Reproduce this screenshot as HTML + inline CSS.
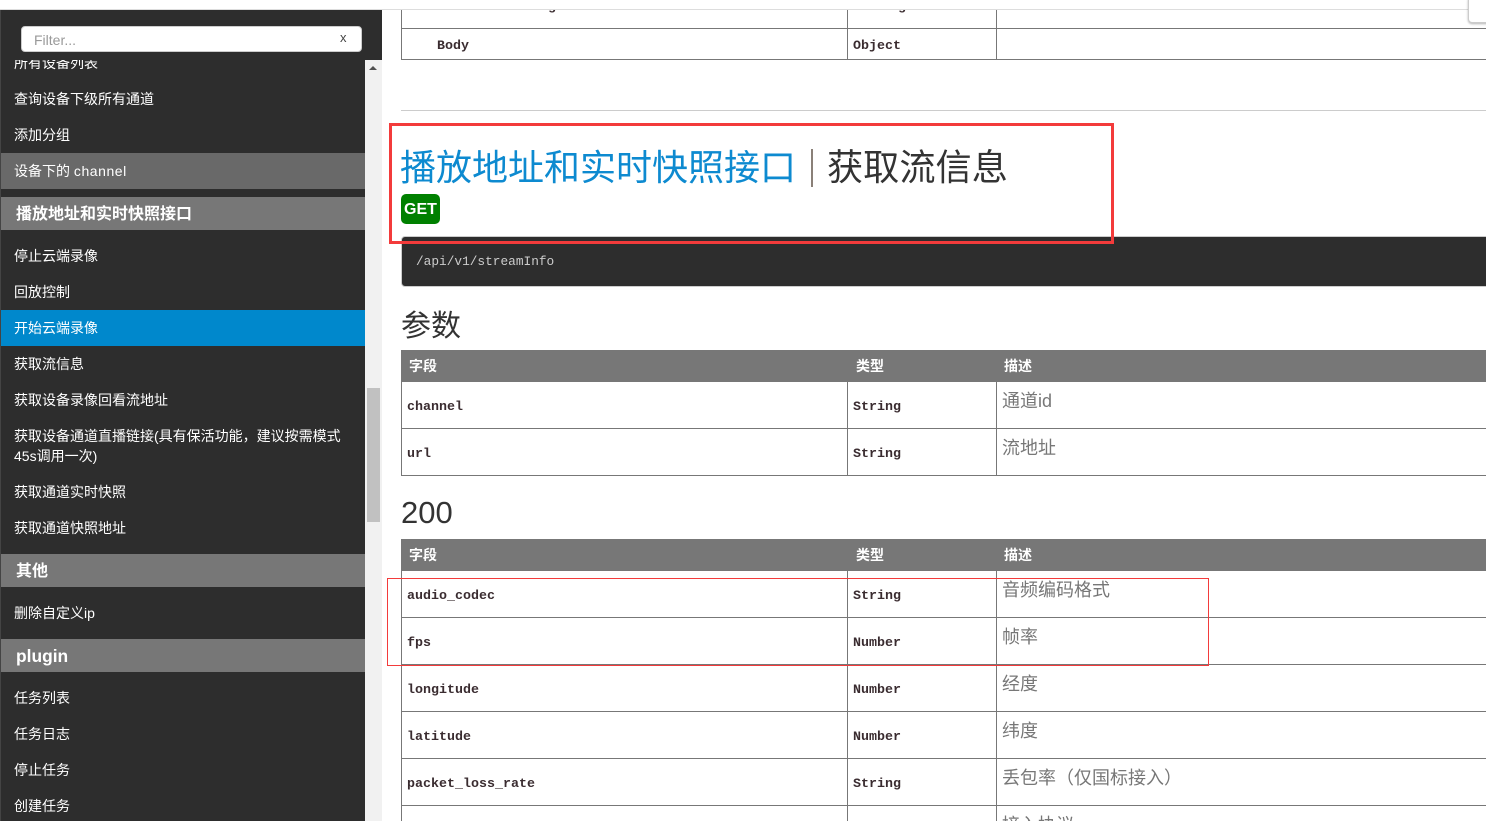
<!DOCTYPE html>
<html lang="zh"><head><meta charset="utf-8"><title>API</title>
<style>
html,body{margin:0;padding:0;background:#fff;overflow:hidden;width:1486px;height:821px}
#p{position:relative;width:1486px;height:821px;overflow:hidden;font-family:"Liberation Sans","Noto Sans CJK SC",sans-serif}
.a{position:absolute}
.t{position:absolute;white-space:nowrap}
.s{left:14px;font-size:14px;line-height:20px;color:#fff;height:20px}
.h{left:16px;font-size:16px;line-height:24px;height:24px;color:#fff;font-weight:700}
.band{position:absolute;left:1px;width:364px}
.l{position:absolute;background:#777}
.m{position:absolute;white-space:nowrap;font-family:"Liberation Mono",monospace;font-weight:700;font-size:13.33px;line-height:16px;height:16px;color:#3a2c30}
.th{position:absolute;white-space:nowrap;font-size:14px;font-weight:700;color:#fff;line-height:20px;height:20px}
.d{position:absolute;left:1002px;white-space:nowrap;font-size:18px;line-height:24px;height:24px;color:#777}
</style></head><body><div id="p">

<!-- top strip -->
<div class="a" style="left:0;top:9px;width:1486px;height:1px;background:#ddd"></div>

<!-- first table fragment -->
<div class="l" style="left:401px;top:10px;width:1px;height:50px"></div>
<div class="l" style="left:847px;top:10px;width:1px;height:50px"></div>
<div class="l" style="left:996px;top:10px;width:1px;height:50px"></div>
<div class="l" style="left:401px;top:28px;width:1085px;height:1px"></div>
<div class="l" style="left:401px;top:59px;width:1085px;height:1px"></div>
<div class="a" style="left:517px;top:10px;width:50px;height:3px;overflow:hidden"><span class="m" style="left:31px;top:-10px">g</span></div>
<div class="a" style="left:880px;top:10px;width:50px;height:3px;overflow:hidden"><span class="m" style="left:18px;top:-10px">g</span></div>
<span class="m" style="left:437px;top:39px">Body</span>
<span class="m" style="left:853px;top:39px">Object</span>
<div class="a" style="left:1468px;top:-4px;width:24px;height:25px;background:#fff;border:1px solid #ccc;border-radius:4px;box-shadow:0 1px 2px rgba(0,0,0,.3)"></div>

<div class="a" style="left:401px;top:110px;width:1085px;height:1px;background:#ccc"></div>

<!-- title -->
<div class="t" style="left:400px;top:143px;font-size:36px;line-height:50px;height:50px;color:#0d8ad0">播放地址和实时快照接口</div>
<div class="a" style="left:811px;top:149px;width:2px;height:38px;background:#8a8078"></div>
<div class="t" style="left:827px;top:143px;font-size:36.2px;line-height:50px;height:50px;color:#333">获取流信息</div>
<div class="a" style="left:401px;top:194px;width:39px;height:30px;background:#008000;border-radius:5px;color:#fff;font-weight:700;font-size:16px;line-height:31px;text-align:center">GET</div>

<!-- code block -->
<div class="a" style="left:401px;top:236px;width:1100px;height:51px;background:#2d2d2d;border:1px solid #ccc;border-radius:4px;box-sizing:border-box"></div>
<div class="t" style="left:416px;top:254px;font-family:'Liberation Mono',monospace;font-size:12.8px;line-height:16px;color:#ccc">/api/v1/streamInfo</div>

<!-- params -->
<div class="t" style="left:401px;top:305px;font-size:30px;line-height:44px;color:#333">参数</div>
<div class="a" style="left:401px;top:350px;width:1085px;height:32px;background:#777"></div>
<span class="th" style="left:409px;top:356px">字段</span>
<span class="th" style="left:856px;top:356px">类型</span>
<span class="th" style="left:1004px;top:356px">描述</span>
<div class="l" style="left:401px;top:382px;width:1px;height:94px"></div>
<div class="l" style="left:847px;top:382px;width:1px;height:94px"></div>
<div class="l" style="left:996px;top:382px;width:1px;height:94px"></div>
<div class="l" style="left:401px;top:428px;width:1085px;height:1px"></div>
<div class="l" style="left:401px;top:475px;width:1085px;height:1px"></div>
<span class="m" style="left:407px;top:400px">channel</span>
<span class="m" style="left:853px;top:400px">String</span>
<span class="d" style="top:389px">通道id</span>
<span class="m" style="left:407px;top:447px">url</span>
<span class="m" style="left:853px;top:447px">String</span>
<span class="d" style="top:436px">流地址</span>

<!-- 200 -->
<div class="t" style="left:401px;top:491px;font-size:31px;line-height:44px;color:#333">200</div>
<div class="a" style="left:401px;top:539px;width:1085px;height:32px;background:#777"></div>
<span class="th" style="left:409px;top:545px">字段</span>
<span class="th" style="left:856px;top:545px">类型</span>
<span class="th" style="left:1004px;top:545px">描述</span>
<div class="l" style="left:401px;top:571px;width:1px;height:250px"></div>
<div class="l" style="left:847px;top:571px;width:1px;height:250px"></div>
<div class="l" style="left:996px;top:571px;width:1px;height:250px"></div>
<div class="l" style="left:401px;top:617px;width:1085px;height:1px"></div>
<div class="l" style="left:401px;top:664px;width:1085px;height:1px"></div>
<div class="l" style="left:401px;top:711px;width:1085px;height:1px"></div>
<div class="l" style="left:401px;top:758px;width:1085px;height:1px"></div>
<div class="l" style="left:401px;top:805px;width:1085px;height:1px"></div>
<span class="m" style="left:407px;top:589px">audio_codec</span>
<span class="m" style="left:853px;top:589px">String</span>
<span class="d" style="top:578px">音频编码格式</span>
<span class="m" style="left:407px;top:636px">fps</span>
<span class="m" style="left:853px;top:636px">Number</span>
<span class="d" style="top:625px">帧率</span>
<span class="m" style="left:407px;top:683px">longitude</span>
<span class="m" style="left:853px;top:683px">Number</span>
<span class="d" style="top:672px">经度</span>
<span class="m" style="left:407px;top:730px">latitude</span>
<span class="m" style="left:853px;top:730px">Number</span>
<span class="d" style="top:719px">纬度</span>
<span class="m" style="left:407px;top:777px">packet_loss_rate</span>
<span class="m" style="left:853px;top:777px">String</span>
<span class="d" style="top:766px">丢包率（仅国标接入）</span>
<span class="d" style="top:813px">接入协议</span>

<!-- annotations -->
<div class="a" style="left:389px;top:123px;width:725px;height:121px;border:3px solid #f33b3b;box-sizing:border-box"></div>
<div class="a" style="left:387px;top:578px;width:822px;height:88px;border:1px solid #f33b3b;box-sizing:border-box"></div>

<!-- sidebar -->
<div class="a" style="left:0;top:10px;width:382px;height:811px;overflow:hidden;background:#f1f1f1">
  <div class="a" style="left:0;top:0;width:1px;height:811px;background:#444"></div>
  <div class="a" style="left:1px;top:0;width:364px;height:811px;background:#2d2d2d"></div>
</div>
<div class="band" style="top:153px;height:36px;background:#696969"></div>
<div class="band" style="top:197px;height:33px;background:#777"></div>
<div class="band" style="top:310px;height:36px;background:#0088cc"></div>
<div class="band" style="top:554px;height:33px;background:#777"></div>
<div class="band" style="top:639px;height:33px;background:#777"></div>

<span class="t s" style="top:53px">所有设备列表</span>
<div class="a" style="left:1px;top:10px;width:381px;height:50px;background:#2d2d2d"></div>
<div class="a" style="left:21px;top:26px;width:341px;height:26px;background:#fff;border:1px solid #ccc;border-radius:4px;box-sizing:border-box"></div>
<span class="t" style="left:34px;top:30px;font-size:14px;line-height:20px;color:#999">Filter...</span>
<span class="t" style="left:340px;top:28px;font-size:13px;line-height:20px;color:#444">x</span>

<span class="t s" style="top:89px">查询设备下级所有通道</span>
<span class="t s" style="top:125px">添加分组</span>
<span class="t s" style="top:161px">设备下的 <span style="letter-spacing:.55px">channel</span></span>
<span class="t h" style="top:203px">播放地址和实时快照接口</span>
<span class="t s" style="top:246px">停止云端录像</span>
<span class="t s" style="top:282px">回放控制</span>
<span class="t s" style="top:318px">开始云端录像</span>
<span class="t s" style="top:354px">获取流信息</span>
<span class="t s" style="top:390px">获取设备录像回看流地址</span>
<span class="t s" style="top:426px">获取设备通道直播链接(具有保活功能，建议按需模式</span>
<span class="t s" style="top:446px">45s调用一次)</span>
<span class="t s" style="top:482px">获取通道实时快照</span>
<span class="t s" style="top:518px">获取通道快照地址</span>
<span class="t h" style="top:560px">其他</span>
<span class="t s" style="top:603px">删除自定义ip</span>
<span class="t h" style="top:644px;font-size:17.4px">plugin</span>
<span class="t s" style="top:688px">任务列表</span>
<span class="t s" style="top:724px">任务日志</span>
<span class="t s" style="top:760px">停止任务</span>
<span class="t s" style="top:796px">创建任务</span>

<!-- scrollbar -->
<div class="a" style="left:369px;top:66px;width:0;height:0;border-left:4px solid transparent;border-right:4px solid transparent;border-bottom:4px solid #505050"></div>
<div class="a" style="left:367px;top:388px;width:13px;height:134px;background:#c1c1c1"></div>

</div></body></html>
